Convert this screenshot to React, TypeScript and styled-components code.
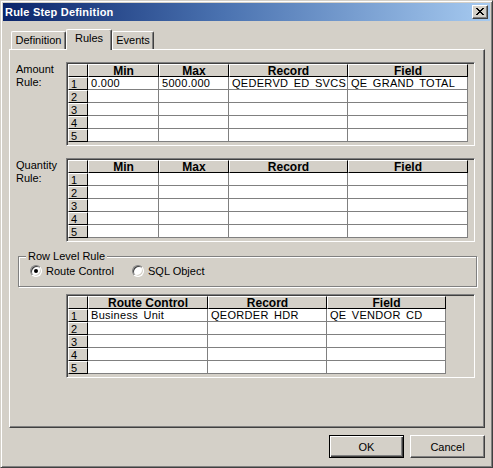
import React from "react";
import styled, { createGlobalStyle } from "styled-components";

const GlobalStyle = createGlobalStyle`
  html, body {
    margin: 0;
    padding: 0;
    background: #d4d0c8;
  }
  body {
    font-family: "Liberation Sans", Arial, sans-serif;
    font-size: 11px;
    color: #000;
  }
`;

type Row = string[];

const amountRows: Row[] = [
  ["0.000", "5000.000", "QEDERVD ED SVCS", "QE GRAND TOTAL"],
  ["", "", "", ""],
  ["", "", "", ""],
  ["", "", "", ""],
  ["", "", "", ""],
];

const quantityRows: Row[] = [
  ["", "", "", ""],
  ["", "", "", ""],
  ["", "", "", ""],
  ["", "", "", ""],
  ["", "", "", ""],
];

const routeRows: Row[] = [
  ["Business Unit", "QEORDER HDR", "QE VENDOR CD"],
  ["", "", ""],
  ["", "", ""],
  ["", "", ""],
  ["", "", ""],
];

const RuleGrid = ({
  columns,
  widths,
  rows,
}: {
  columns: string[];
  widths: number[];
  rows: Row[];
}) => {
  const template = [20, ...widths].map((w) => `${w}px`).join(" ");
  return (
    <GridFrame>
      <Table $cols={template}>
        <HeadCell />
        {columns.map((c) => (
          <HeadCell key={c}>{c}</HeadCell>
        ))}
        {rows.map((r, i) => (
          <React.Fragment key={i}>
            <RowHead>{i + 1}</RowHead>
            {r.map((v, j) => (
              <Cell key={j}>{v}</Cell>
            ))}
          </React.Fragment>
        ))}
      </Table>
    </GridFrame>
  );
};

const CloseGlyph = () => (
  <svg width="8" height="7" viewBox="0 0 8 7" shapeRendering="crispEdges">
    <path
      fill="#000"
      d="M0 0h2v1H0zM6 0h2v1H6zM1 1h2v1H1zM5 1h2v1H5zM2 2h4v1H2zM3 3h2v1H3zM2 4h4v1H2zM1 5h2v1H1zM5 5h2v1H5zM0 6h2v1H0zM6 6h2v1H6z"
    />
  </svg>
);

export default function App() {
  return (
    <>
      <GlobalStyle />
      <Window>
        <TitleBar>
          <Title>Rule Step Definition</Title>
          <CaptionButton>
            <CloseGlyph />
          </CaptionButton>
        </TitleBar>
        <Body>
          <TabStrip>
            <Tab $w={55}>Definition</Tab>
            <Tab $w={46} $active>
              Rules
            </Tab>
            <Tab $w={42}>Events</Tab>
          </TabStrip>
          <Panel>
            <RuleSection $top={12}>
              <Label>
                Amount
                <br />
                Rule:
              </Label>
              <RuleGrid
                columns={["Min", "Max", "Record", "Field"]}
                widths={[71, 70, 119, 120]}
                rows={amountRows}
              />
            </RuleSection>
            <RuleSection $top={12}>
              <Label>
                Quantity
                <br />
                Rule:
              </Label>
              <RuleGrid
                columns={["Min", "Max", "Record", "Field"]}
                widths={[71, 70, 119, 120]}
                rows={quantityRows}
              />
            </RuleSection>
            <GroupBox>
              <Legend>Row Level Rule</Legend>
              <RadioRow>
                <RadioItem>
                  <RadioCircle $checked />
                  Route Control
                </RadioItem>
                <RadioItem>
                  <RadioCircle $checked={false} />
                  SQL Object
                </RadioItem>
              </RadioRow>
            </GroupBox>
            <RuleSection $top={7}>
              <Label />
              <RuleGrid
                columns={["Route Control", "Record", "Field"]}
                widths={[120, 119, 119]}
                rows={routeRows}
              />
            </RuleSection>
          </Panel>
          <ButtonRow>
            <Button $default>OK</Button>
            <Button>Cancel</Button>
          </ButtonRow>
        </Body>
      </Window>
    </>
  );
}

const Window = styled.div`
  width: 493px;
  height: 468px;
  box-sizing: border-box;
  display: flex;
  flex-direction: column;
  padding: 2px;
  background: #d4d0c8;
  border: 1px solid;
  border-color: #d4d0c8 #404040 #404040 #d4d0c8;
  box-shadow: inset 1px 1px #fff, inset -1px -1px #808080;
`;

const TitleBar = styled.div`
  height: 18px;
  flex-shrink: 0;
  display: flex;
  align-items: center;
  justify-content: space-between;
  padding: 0 2px;
  background: linear-gradient(90deg, #0a246a 0%, #4a72b0 45%, #a6caf0 100%);
`;

const Title = styled.span`
  color: #fff;
  font-weight: bold;
  font-size: 11px;
  letter-spacing: 0.2px;
  line-height: 18px;
`;

const CaptionButton = styled.div`
  width: 16px;
  height: 14px;
  box-sizing: border-box;
  display: flex;
  align-items: center;
  justify-content: center;
  padding: 0 1px 1px 0;
  background: #d4d0c8;
  border: 1px solid;
  border-color: #fff #404040 #404040 #fff;
  box-shadow: inset -1px -1px #808080;
`;

const Body = styled.div`
  flex: 1;
  display: flex;
  flex-direction: column;
  padding: 8px 5px 0 6px;
`;

const TabStrip = styled.div`
  height: 20px;
  display: flex;
  align-items: flex-end;
  padding-left: 2px;
  position: relative;
  z-index: 1;
`;

const Tab = styled.div<{ $w: number; $active?: boolean }>`
  width: ${(p) => p.$w}px;
  height: ${(p) => (p.$active ? 21 : 18)}px;
  margin-bottom: ${(p) => (p.$active ? -1 : 0)}px;
  box-sizing: border-box;
  background: #d4d0c8;
  border-top: 1px solid #fff;
  border-left: 1px solid #fff;
  border-right: 1px solid #404040;
  border-top-left-radius: 2px;
  border-top-right-radius: 2px;
  box-shadow: inset -1px 0 #808080;
  text-align: center;
  line-height: ${(p) => (p.$active ? 17 : 16)}px;
`;

const Panel = styled.div`
  height: 379px;
  box-sizing: border-box;
  display: flex;
  flex-direction: column;
  border: 1px solid;
  border-color: #fff #404040 #404040 #fff;
  box-shadow: inset -1px -1px #808080;
`;

const RuleSection = styled.div<{ $top: number }>`
  display: flex;
  margin-top: ${(p) => p.$top}px;
  padding-left: 6px;
`;

const Label = styled.div`
  width: 50px;
  flex-shrink: 0;
  line-height: 13px;
  padding-top: 1px;
`;

const GridFrame = styled.div`
  width: 409px;
  height: 84px;
  box-sizing: border-box;
  padding: 1px;
  background: #d4d0c8;
  border: 1px solid;
  border-color: #808080 #fff #fff #808080;
  box-shadow: inset 1px 1px #404040, inset -1px -1px #d4d0c8;
`;

const Table = styled.div<{ $cols: string }>`
  display: grid;
  grid-template-columns: ${(p) => p.$cols};
  grid-auto-rows: 13px;
  width: fit-content;
`;

const HeadCell = styled.div`
  box-sizing: border-box;
  background: #d4d0c8;
  border: 1px solid;
  border-color: #fff #000 #000 #fff;
  font-weight: bold;
  font-size: 12px;
  text-align: center;
  line-height: 12px;
  overflow: hidden;
  white-space: nowrap;
`;

const RowHead = styled(HeadCell)`
  font-weight: normal;
  font-size: 11px;
  text-align: left;
  padding-left: 2px;
`;

const Cell = styled.div`
  box-sizing: border-box;
  background: #fff;
  border-right: 1px solid #808080;
  border-bottom: 1px solid #808080;
  padding-left: 3px;
  line-height: 13px;
  overflow: hidden;
  white-space: nowrap;
  letter-spacing: 0.3px;
  word-spacing: 2px;
`;

const GroupBox = styled.div`
  position: relative;
  width: 457px;
  height: 29px;
  margin: 14px 0 0 8px;
  border: 1px solid #808080;
  box-shadow: inset 1px 1px #fff, 1px 1px #fff;
`;

const Legend = styled.span`
  position: absolute;
  top: -7px;
  left: 7px;
  padding: 0 2px;
  background: #d4d0c8;
  line-height: 13px;
`;

const RadioRow = styled.div`
  display: flex;
  padding: 8px 0 0 11px;
`;

const RadioItem = styled.label`
  display: flex;
  align-items: center;
  gap: 4px;
  min-width: 102px;
  line-height: 12px;
`;

const RadioCircle = styled.span<{ $checked: boolean }>`
  position: relative;
  width: 12px;
  height: 12px;
  box-sizing: border-box;
  border-radius: 50%;
  background: #fff;
  border: 1px solid;
  border-color: #808080 #fff #fff #808080;
  box-shadow: inset 1px 1px #404040, inset -1px -1px #d4d0c8;

  &::after {
    content: "";
    display: ${(p) => (p.$checked ? "block" : "none")};
    position: absolute;
    left: 3px;
    top: 3px;
    width: 4px;
    height: 4px;
    border-radius: 50%;
    background: #000;
  }
`;

const ButtonRow = styled.div`
  display: flex;
  justify-content: flex-end;
  gap: 6px;
  margin-top: 7px;
`;

const Button = styled.div<{ $default?: boolean }>`
  width: 75px;
  height: 23px;
  box-sizing: border-box;
  display: flex;
  align-items: center;
  justify-content: center;
  background: #d4d0c8;
  border: 1px solid;
  border-color: ${(p) => (p.$default ? "#000" : "#fff #404040 #404040 #fff")};
  box-shadow: ${(p) =>
    p.$default
      ? "inset 1px 1px #fff, inset -1px -1px #404040, inset -2px -2px #808080"
      : "inset -1px -1px #808080"};
`;
